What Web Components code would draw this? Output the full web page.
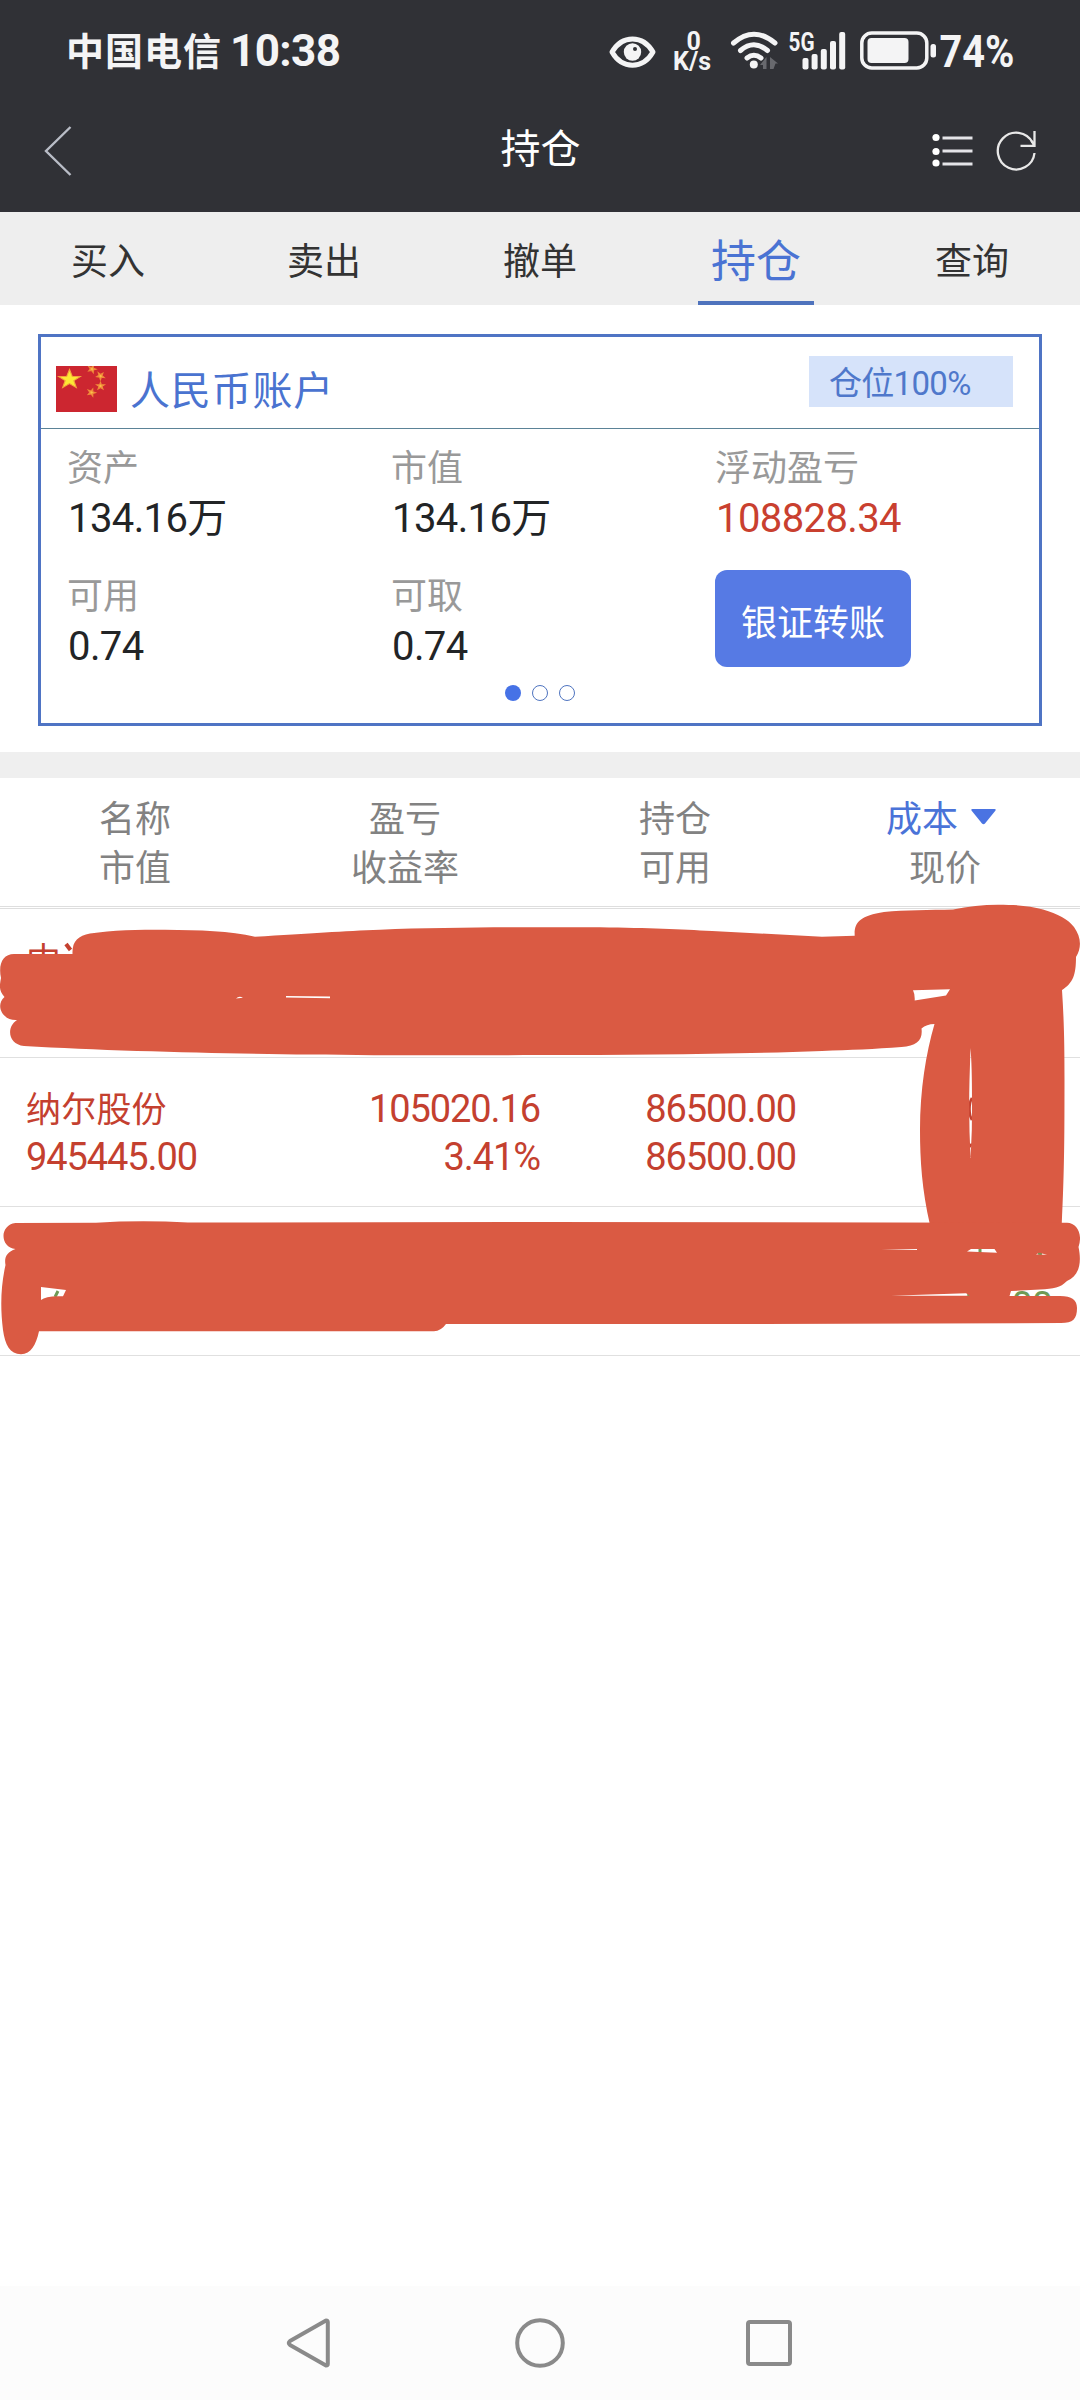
<!DOCTYPE html>
<html lang="zh-CN">
<head>
<meta charset="utf-8">
<title>持仓</title>
<style>
  body {
    margin: 0;
    background: #fff;
  }
</style>
</head>
<body>
<trade-app></trade-app>

<script>
const CJK = `"Noto Sans CJK SC", sans-serif`;
const NUM = `Roboto, "Noto Sans CJK SC", sans-serif`;

class StatusBar extends HTMLElement {
  constructor() {
    super();
    this.attachShadow({ mode: 'open' });
    this.shadowRoot.innerHTML = `
    <style>
      :host {
        display: flex;
        align-items: center;
        box-sizing: border-box;
        height: 102px;
        padding: 0 50px 0 66px;
        color: #f4f4f5;
        font: 700 44px ${NUM};
      }
      .carrier {
        font: 700 38px/60px ${CJK};
        letter-spacing: 1px;
        margin-right: 8px;
        padding-bottom: 4px;
      }
      .time {
        line-height: 51px;
        letter-spacing: -.6px;
        flex: 1;
      }
      svg {
        display: block;
        flex: none;
        font: 700 25px Roboto, sans-serif;
        fill: #f4f4f5;
      }
    </style>
    <span class="carrier">中国电信</span>
    <span class="time">10:38</span>
    <svg width="331" height="102" viewBox="608 0 331 102">
      <path d="M612 52C622 34.500 643 34.500 653 52C643 69.500 622 69.500 612 52Z" fill="none" stroke="#f4f4f5" stroke-width="5" stroke-linejoin="round"/>
      <circle cx="632.500" cy="52" r="8.700"/>
      <circle cx="635" cy="49" r="2" fill="#303136"/>
      <text><tspan x="686.500" y="50">0</tspan><tspan x="673" y="69.500">K/s</tspan></text>
      <g fill="none" stroke="#f4f4f5" stroke-width="5" stroke-linecap="round">
        <path d="M733.500 43Q753.800 25.500 775 43"/>
        <path d="M740.500 50.500Q753.800 39 767.500 50.500"/>
        <path d="M747 58Q753.800 52.500 761 58"/>
      </g>
      <circle cx="753.800" cy="64.500" r="4"/>
      <path d="M760 65l6.500-8v12h-3.500v-4zM770 57l8 6.500h-2.500l-2 5.500h-3.500z" fill="#68696e"/>
      <text x="788.500" y="50.500" textLength="26" lengthAdjust="spacingAndGlyphs">5G</text>
      <rect x="802.500" y="58" width="6" height="11.500" rx="2"/>
      <rect x="811.600" y="54" width="6" height="15.500" rx="2"/>
      <rect x="820.800" y="49" width="6" height="20.500" rx="2"/>
      <rect x="830" y="41" width="6" height="28.500" rx="2"/>
      <rect x="839.200" y="32" width="6" height="37.500" rx="2"/>
      <rect x="861.800" y="33" width="65" height="35" rx="10" fill="none" stroke="#f4f4f5" stroke-width="3.500"/>
      <rect x="867.500" y="38" width="41" height="25" rx="4"/>
      <rect x="930.500" y="44" width="5.500" height="13.500" rx="2.500"/>
    </svg>
    <svg width="91" height="102" viewBox="939 0 91 102">
      <text x="939.500" y="67" style="font-size: 44px" textLength="75" lengthAdjust="spacingAndGlyphs">74%</text>
    </svg>
    `;
  }
}

class TitleBar extends HTMLElement {
  constructor() {
    super();
    this.attachShadow({ mode: 'open' });
    this.shadowRoot.innerHTML = `
    <style>
      :host {
        display: grid;
        grid-template-columns: 200px 1fr 200px;
        align-items: center;
        height: 98px;
        padding-bottom: 12px;
        color: #fff;
      }
      svg {
        display: block;
        fill: none;
      }
      h1 {
        margin: 0;
        padding: 0 0 11px 1px;
        text-align: center;
        font: 400 40px/60px ${CJK};
      }
      .actions {
        display: flex;
        justify-content: flex-end;
        gap: 22px;
        padding-right: 44px;
      }
      .back {
        margin-left: 43px;
      }
    </style>
    <svg class="back" width="30" height="52" viewBox="0 0 30 52">
      <path d="M27.500 2L3 26l24.500 24" stroke="#b9bdc7" stroke-width="2.400"/>
    </svg>
    <h1><slot></slot></h1>
    <div class="actions">
      <svg width="41" height="42" viewBox="0 0 41 42">
        <g fill="#fff">
          <circle cx="4" cy="7.500" r="3.600"/>
          <circle cx="4" cy="21.500" r="3.600"/>
          <circle cx="4" cy="33" r="3.600"/>
        </g>
        <path d="M10.500 8h30M10.500 21h30M10.500 34h30" stroke="#e4e4e8" stroke-width="2.800"/>
      </svg>
      <svg width="41" height="42" viewBox="0 0 41 42">
        <path d="M37.500 12.500A18.400 18.400 0 1 0 39.500 23" stroke="#e8e8e8" stroke-width="2.300"/>
        <path d="M25.500 15.800h14V1M39.500 15.800l-3-5" stroke="#e8e8e8" stroke-width="2.300"/>
      </svg>
    </div>
    `;
  }
}

class TabItem extends HTMLElement {
  constructor() {
    super();
    this.attachShadow({ mode: 'open' });
    this.shadowRoot.innerHTML = `
    <style>
      :host {
        display: flex;
        justify-content: center;
        color: #333;
        font: 400 37px/95px ${CJK};
      }
      :host([active]) {
        color: #4a73d3;
        font-size: 45px;
      }
      span {
        box-sizing: border-box;
        width: 116px;
        height: 93px;
        text-align: center;
      }
      :host([active]) span {
        line-height: 94px;
        border-bottom: 4px solid #4f73bd;
      }
    </style>
    <span><slot></slot></span>
    `;
  }
}

class TabBar extends HTMLElement {
  constructor() {
    super();
    this.attachShadow({ mode: 'open' });
    this.shadowRoot.innerHTML = `
    <style>
      :host {
        display: grid;
        grid-template-columns: repeat(5, 1fr);
        height: 93px;
        background: #eee;
      }
    </style>
    <slot></slot>
    `;
  }
}

class AccountFigure extends HTMLElement {
  constructor() {
    super();
    this.attachShadow({ mode: 'open' });
    this.shadowRoot.innerHTML = `
    <style>
      :host {
        display: block;
        height: 107px;
        color: #222426;
      }
      :host([gain]) {
        color: #c9402f;
      }
      .label {
        color: #999;
        font: 400 36px/50px ${CJK};
      }
      .value {
        padding-left: 1px;
        font: 400 40px/57px ${NUM};
        letter-spacing: -.6px;
      }
    </style>
    <div class="label">${this.getAttribute('label')}</div>
    <div class="value"><slot></slot></div>
    `;
  }
}

class AccountCard extends HTMLElement {
  constructor() {
    super();
    this.attachShadow({ mode: 'open' });
    // small stars: x, y, rotation
    const stars = [[36, 3, 20], [44.5, 10, 40], [44.5, 20, 0], [35.5, 26.5, 20]];
    const star = 'M0-10L2.400-3.200 9.500-3.100 3.800 1.200 5.900 8.100 0 4 -5.900 8.100 -3.800 1.200 -9.500-3.100 -2.400-3.200Z';
    this.shadowRoot.innerHTML = `
    <style>
      :host {
        display: block;
        box-sizing: border-box;
        height: 392px;
        margin: 29px 38px 26px;
        border: 3px solid #4f74c4;
      }
      header {
        display: flex;
        align-items: flex-start;
        box-sizing: border-box;
        height: 92px;
        padding: 0 26px 0 15px;
        border-bottom: 1px solid #5b8397;
      }
      .flag {
        display: block;
        margin-top: 29px;
      }
      h2 {
        flex: 1;
        margin: 28px 0 0 13px;
        color: #4a73d0;
        font: 400 40px/46px ${CJK};
        letter-spacing: .8px;
      }
      .badge {
        box-sizing: border-box;
        width: 204px;
        height: 51px;
        margin-top: 19px;
        padding-left: 20px;
        background: #d6e3fa;
        color: #4f78cb;
        font: 400 33px/55px ${NUM};
        letter-spacing: -.7px;
      }
      .figures {
        display: grid;
        grid-template-columns: 324px 324px 1fr;
        row-gap: 21px;
        padding: 11px 0 0 26px;
      }
      button {
        width: 196px;
        height: 97px;
        margin: 2px 0 0;
        padding: 2px 0 0;
        border: 0;
        border-radius: 12px;
        background: #567ae4;
        color: #fff;
        font: 400 36px ${CJK};
      }
      .dots {
        display: flex;
        justify-content: center;
        gap: 11px;
        margin-top: 10px;
      }
      .dots i {
        box-sizing: border-box;
        width: 16px;
        height: 16px;
        border: 1px solid #4f74c0;
        border-radius: 50%;
      }
      .dots i.on {
        border: 0;
        background: #4672e6;
      }
    </style>
    <header>
      <svg class="flag" width="61" height="46" viewBox="0 0 61 46">
        <rect width="61" height="46" fill="#cc2630"/>
        <path d="${star}" transform="translate(13.500 13.500) scale(1.150 1)" fill="#fde834" stroke="#f3a43c"/>
        ${stars.map(([x, y, r]) => `<path d="${star}" transform="translate(${x} ${y}) rotate(${r}) scale(.4 .36)" fill="#fbc04a" stroke="#ef8a3a" stroke-width="3"/>`).join('')}
      </svg>
      <h2><slot name="title"></slot></h2>
      <div class="badge"><slot name="badge"></slot></div>
    </header>
    <div class="figures">
      <slot></slot>
      <button><slot name="action"></slot></button>
    </div>
    <div class="dots"><i class="on"></i><i></i><i></i></div>
    `;
  }
}

class HoldingsHead extends HTMLElement {
  constructor() {
    super();
    this.attachShadow({ mode: 'open' });
    this.shadowRoot.innerHTML = `
    <style>
      :host {
        display: grid;
        grid-template-columns: repeat(4, 1fr);
        box-sizing: border-box;
        height: 157px;
        padding-top: 14px;
        border-top: 26px solid #efefef;
        border-bottom: 3px double #dedede;
        color: #828282;
        font: 400 36px/49px ${CJK};
        text-align: center;
      }
      .sort {
        display: flex;
        justify-content: center;
        align-items: center;
        gap: 13px;
        padding-right: 8px;
        color: #4a73d8;
      }
      svg {
        fill: #4a73e2;
      }
    </style>
    <div>名称<br>市值</div>
    <div>盈亏<br>收益率</div>
    <div>持仓<br>可用</div>
    <div>
      <div class="sort">成本<svg width="25" height="16" viewBox="0 0 25 16"><path d="M1.500 0h22q2 0 .8 1.800L14 14.500q-1.500 1.500-3 0L.7 1.800Q-.5 0 1.500 0z"/></svg></div>
      现价
    </div>
    `;
  }
}

class HoldingRow extends HTMLElement {
  constructor() {
    super();
    this.attachShadow({ mode: 'open' });
    this.shadowRoot.innerHTML = `
    <style>
      :host {
        display: grid;
        grid-template-columns: 244px 270px 256px 256px;
        box-sizing: border-box;
        height: 149px;
        padding: 27px 0 0 26px;
        border-bottom: 1px solid #e0e0e0;
        color: #c4402f;
        font: 400 38px/48px ${NUM};
        letter-spacing: -1.1px;
        text-align: right;
      }
      :host([loss]) {
        color: #6f9a55;
      }
      div {
        min-height: 96px;
      }
      .name {
        text-align: left;
      }
      ::slotted(b) {
        font-weight: 400;
        font-size: 35px;
        line-height: 1;
        letter-spacing: .2px;
      }
    </style>
    <div class="name"><slot name="name"></slot></div>
    <div><slot name="profit"></slot></div>
    <div><slot name="amount"></slot></div>
    <div><slot name="price"></slot></div>
    `;
  }
}

// marker strokes drawn over the rows; coordinates are page pixels, top edge at 900
class MarkerInk extends HTMLElement {
  constructor() {
    super();
    this.attachShadow({ mode: 'open' });
    this.shadowRoot.innerHTML = `
    <style>
      :host {
        display: block;
        position: absolute;
        left: 0;
        top: -9px;
      }
      svg {
        display: block;
      }
    </style>
    <svg width="1080" height="460" viewBox="0 900 1080 460">
      <g fill="none" stroke="#c4402f" stroke-width="2.600">
        <path d="M66 944l4.500 6" stroke-width="4"/>
        <path d="M972 1098q-2.500 4-2.500 11t2.500 11M969 1147l3-3"/>
      </g>
      <g fill="none" stroke="#6f9a55" stroke-width="3">
        <path d="M58 1291l-3 6M980 1248v6M1038 1253l4 1M968 1296l2-3M1006 1296l3-3"/>
      </g>
      <g fill="#da5a43" fill-rule="evenodd">
        <path d="M14 954H72.500C72 941 78 936 90 933.500C112 930 138 929.700 165 929.700C200 930 230 931 255 936.700C310 933.500 344 931 380 929.700C430 927.700 490 927.300 540 927.300H600C650 928 680 929.500 712 931L822 936.700L854.700 935.700C854 922 860 916 884 912C905 910 930 910 953 909.500C968 906.500 983 904.700 998 904.700C1017 904.700 1030 906 1043 909.500C1058 914 1068 919 1074 927C1081 937 1082 947 1076 957C1076 975 1073 983 1062 990C1064 1020 1064.500 1045 1064.500 1080C1064.500 1130 1064.500 1170 1061.700 1225H930C922 1190 920 1160 920 1130C920 1090 926 1053 934.500 1024C929 1024 925 1025.500 921.500 1028.500C923 1040 917 1046 901.500 1047C875 1049 850 1050 822 1051C740 1054 640 1055 540 1055C460 1055.500 380 1055.500 310 1054.500C220 1053.500 110 1051 24 1046C8 1044 6 1027 17 1020C2 1021-5 1005 4.500 997C-2 990 0 984 1 978C-2 964 3 954 14 954Z
          M913 990.200L950 989.200L946 995.500L914.700 1000.500Q915 994 913 990.200Z
          M286 996L330 996.500V998.200L286 997.500Z
          M236 998.500Q239 995.500 243 997.700Z
          M970.500 1048Q972.500 1070 971.800 1130L970.600 1158Q968.500 1120 969.500 1080Z"/>
        <path d="M15.500 1223L96 1222.700Q141 1220 188 1222.500L540 1222L1067 1222.700C1077 1223 1083 1234 1078.500 1247C1082 1263 1079 1276 1067 1281C1060 1288 1054 1288.500 1040 1289.500L1011 1291L1009.500 1296H1060C1072 1296 1077 1300 1077 1308C1077 1319 1073 1323 1061 1323L747 1324H446Q441 1331 434 1331.300H39C36 1345 31 1354 21 1354.300C10 1354.300 5 1345 3 1330C0 1306 1 1285 5.500 1265C4 1257 7 1252 15.500 1249C0 1248-1 1225 15.500 1223Z
          M41 1287L66 1290L63 1296.300Q46 1295.500 41 1300Z
          M881 1249.600L917 1249V1250Z
          M967 1251.500L971 1249H994.500L997 1252.800Z
          M1036 1254.500L1039 1252.800L1047 1254.800Z
          M891 1295.800L966 1293.300L970 1295.700Z"/>
      </g>
    </svg>
    `;
  }
}

class NavBar extends HTMLElement {
  constructor() {
    super();
    this.attachShadow({ mode: 'open' });
    this.shadowRoot.innerHTML = `
    <style>
      :host {
        display: flex;
        justify-content: center;
        align-items: center;
        gap: 177px;
        height: 114px;
        background: #fcfcfc;
      }
      svg {
        display: block;
        fill: none;
        stroke: #8a8a8a;
        stroke-width: 4;
        stroke-linejoin: round;
      }
    </style>
    <svg width="52" height="52" viewBox="0 0 52 52"><path d="M41 3.500q1.800 0 1.800 1.800v41.400q0 1.800-1.800 1.800L5 28q-2.500-2 0-4z"/></svg>
    <svg width="52" height="52" viewBox="0 0 52 52"><circle cx="26" cy="26" r="22.800"/></svg>
    <svg width="52" height="52" viewBox="0 0 52 52"><rect x="5" y="5" width="42" height="42" rx="2"/></svg>
    `;
  }
}

class TradeApp extends HTMLElement {
  constructor() {
    super();
    this.attachShadow({ mode: 'open' });
    this.shadowRoot.innerHTML = `
    <style>
      :host {
        display: flex;
        flex-direction: column;
        width: 1080px;
        height: 2400px;
        overflow: hidden;
      }
      .top {
        background: #303136;
      }
      .rows {
        position: relative;
        flex: 1;
      }
    </style>
    <div class="top">
      <status-bar></status-bar>
      <title-bar>持仓</title-bar>
    </div>
    <tab-bar>
      <tab-item>买入</tab-item>
      <tab-item>卖出</tab-item>
      <tab-item>撤单</tab-item>
      <tab-item active>持仓</tab-item>
      <tab-item>查询</tab-item>
    </tab-bar>
    <account-card>
      <span slot="title">人民币账户</span>
      <span slot="badge">仓位100%</span>
      <account-figure label="资产">134.16万</account-figure>
      <account-figure label="市值">134.16万</account-figure>
      <account-figure label="浮动盈亏" gain>108828.34</account-figure>
      <account-figure label="可用">0.74</account-figure>
      <account-figure label="可取">0.74</account-figure>
      <span slot="action">银证转账</span>
    </account-card>
    <holdings-head></holdings-head>
    <div class="rows">
      <holding-row>
        <b slot="name">中</b>
      </holding-row>
      <holding-row>
        <b slot="name">纳尔股份</b><span slot="name"><br>945445.00</span>
        <span slot="profit">105020.16<br>3.41%</span>
        <span slot="amount">86500.00<br>86500.00</span>
      </holding-row>
      <holding-row loss>
        <span slot="price"><br>00</span>
      </holding-row>
      <marker-ink></marker-ink>
    </div>
    <nav-bar></nav-bar>
    `;
  }
}

customElements.define('status-bar', StatusBar);
customElements.define('title-bar', TitleBar);
customElements.define('tab-item', TabItem);
customElements.define('tab-bar', TabBar);
customElements.define('account-figure', AccountFigure);
customElements.define('account-card', AccountCard);
customElements.define('holdings-head', HoldingsHead);
customElements.define('holding-row', HoldingRow);
customElements.define('marker-ink', MarkerInk);
customElements.define('nav-bar', NavBar);
customElements.define('trade-app', TradeApp);
</script>
</body>
</html>
